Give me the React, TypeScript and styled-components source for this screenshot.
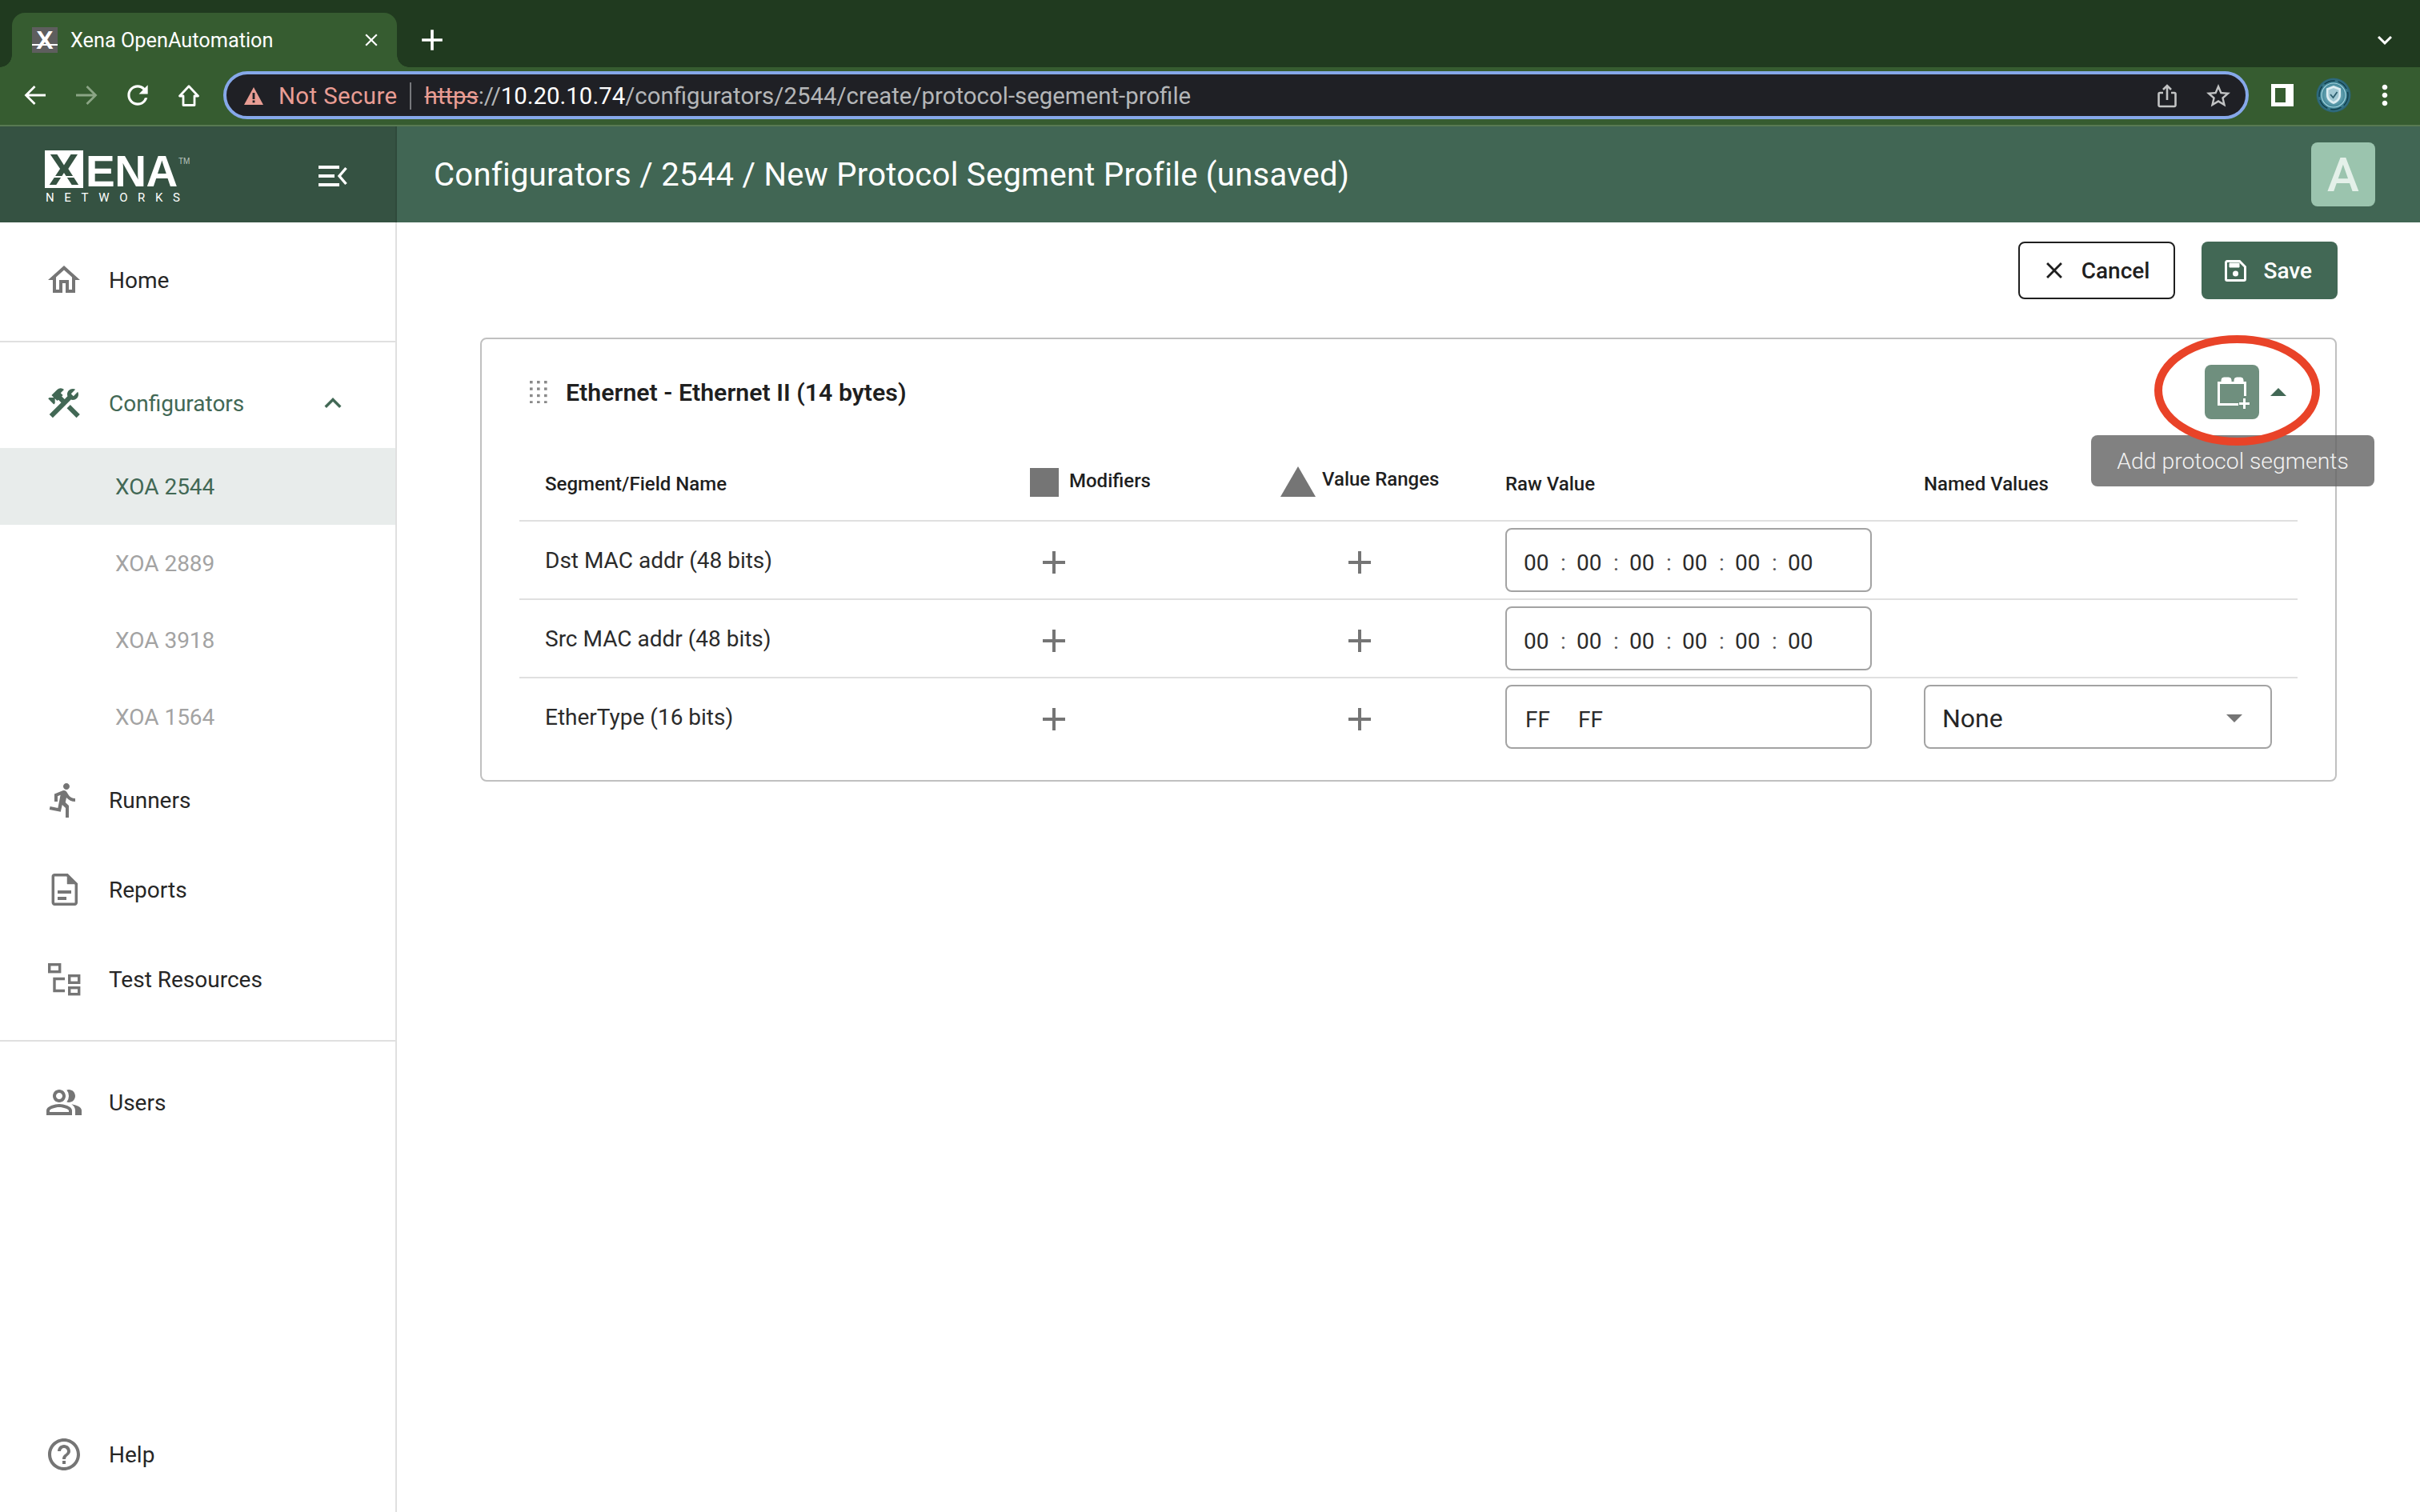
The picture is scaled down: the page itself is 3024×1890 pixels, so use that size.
import React from "react";
import styled, { createGlobalStyle } from "styled-components";
import {
  MdOutlineHome,
  MdConstruction,
  MdDirectionsRun,
  MdOutlinePeopleAlt,
  MdHelpOutline,
  MdKeyboardArrowUp,
  MdRefresh,
  MdClose,
  MdAdd,
  MdKeyboardArrowDown,
  MdMoreVert,
  MdStarBorder,
} from "react-icons/md";

const Global = createGlobalStyle`
  html, body { margin: 0; padding: 0; background: #fff; }
  body { font-family: Roboto, "Liberation Sans", sans-serif; color: #262626; }
  * { box-sizing: border-box; }
`;

const Page = styled.div`
  width: 3024px;
  height: 1890px;
  display: flex;
  flex-direction: column;
  overflow: hidden;
`;

/* ---------- browser chrome ---------- */
const TabStrip = styled.div`
  height: 84px;
  flex: none;
  background: #203a1f;
  display: flex;
  align-items: flex-end;
  padding: 0 12px 0 15px;
`;
const Tab = styled.div`
  position: relative;
  width: 481px;
  height: 68px;
  background: #365c30;
  border-radius: 16px 16px 0 0;
  display: flex;
  align-items: center;
  padding: 0 19px 0 25px;
  color: #fff;
  font-size: 25.3px;
  &::before,
  &::after {
    content: "";
    position: absolute;
    bottom: 0;
    width: 15px;
    height: 15px;
  }
  &::before {
    left: -15px;
    background: radial-gradient(circle at 0 0, transparent 14.5px, #365c30 15px);
  }
  &::after {
    right: -15px;
    background: radial-gradient(circle at 100% 0, transparent 14.5px, #365c30 15px);
  }
`;
const Favicon = styled.div`
  position: relative;
  width: 32px;
  height: 32px;
  flex: none;
  background: #5e5e5e;
  color: #fff;
  font: 700 32px/32px "Liberation Sans", sans-serif;
  text-align: center;
  &::after {
    content: "";
    position: absolute;
    left: 0;
    right: 0;
    top: 21px;
    height: 2px;
    background: #fff;
  }
`;
const TabTitle = styled.span`
  flex: 1;
  margin-left: 16px;
  white-space: nowrap;
`;
const NewTab = styled.div`
  width: 48px;
  height: 68px;
  margin-left: 20px;
  display: flex;
  align-items: center;
  justify-content: center;
  color: #fff;
`;
const StripEnd = styled.div`
  margin-left: auto;
  width: 64px;
  height: 68px;
  display: flex;
  align-items: center;
  justify-content: center;
  color: #fff;
`;
const Toolbar = styled.div`
  height: 74px;
  flex: none;
  background: #365c30;
  border-bottom: 2px solid #587a52;
  display: flex;
  align-items: center;
  padding: 0 12px;
`;
const ToolButton = styled.div<{ $dim?: boolean }>`
  width: 64px;
  height: 64px;
  flex: none;
  margin-top: -2px;
  display: flex;
  align-items: center;
  justify-content: center;
  color: ${(p) => (p.$dim ? "#8ba585" : "#fff")};
`;
const UrlBar = styled.div`
  flex: 1;
  height: 60px;
  margin: -2px 10px 0 11px;
  background: #1f2025;
  border: 4px solid #86a8e9;
  border-radius: 30px;
  display: flex;
  align-items: center;
  padding: 1px 16px 0 22px;
  font-size: 29.4px;
  white-space: nowrap;
`;
const NotSecure = styled.span`
  color: #e99d94;
  margin-left: 19px;
  letter-spacing: 0.4px;
`;
const UrlDivider = styled.span`
  width: 2px;
  height: 34px;
  background: #77787c;
  margin: 0 17px 0 15px;
`;
const Strike = styled.span`
  color: #e99d94;
  text-decoration: line-through;
`;
const UrlGrey = styled.span`
  color: #b4b6b8;
`;
const UrlWhite = styled.span`
  color: #fff;
`;
const UrlIcons = styled.div`
  margin-left: auto;
  display: flex;
  align-items: center;
  gap: 34px;
  color: #c2c3c4;
`;

/* ---------- app header ---------- */
const Header = styled.header`
  height: 120px;
  flex: none;
  display: flex;
`;
const Brand = styled.div`
  width: 496px;
  flex: none;
  background: #355242;
  border-right: 2px solid #2f4a3b;
  display: flex;
  align-items: center;
  justify-content: space-between;
  padding: 4px 60px 0 56px;
  color: #fff;
`;
const LogoBlock = styled.div`
  display: flex;
  flex-direction: column;
  gap: 6px;
`;
const LogoRow = styled.div`
  display: flex;
  align-items: flex-end;
  height: 47px;
`;
const LogoMark = styled.span`
  position: relative;
  width: 48px;
  height: 47px;
  background: #fff;
  color: #355242;
  font: 700 56px/47px "Liberation Sans", sans-serif;
  text-align: center;
  &::after {
    content: "";
    position: absolute;
    left: 0;
    right: 0;
    top: 32px;
    height: 2px;
    background: #fff;
  }
`;
const LogoWord = styled.span`
  font: 700 55px/42px "Liberation Sans", sans-serif;
  margin-left: 3px;
  letter-spacing: -0.4px;
`;
const LogoTm = styled.span`
  font: 400 10px/10px "Liberation Sans", sans-serif;
  align-self: flex-start;
  margin: 9px 0 0 1px;
  color: #b9c6bf;
`;
const LogoSub = styled.span`
  font: 400 15px/12px Roboto, sans-serif;
  letter-spacing: 12.6px;
  padding-left: 1px;
`;
const TitleBar = styled.div`
  flex: 1;
  background: #416654;
  display: flex;
  align-items: center;
  justify-content: space-between;
  padding: 0 56px 0 46px;
  color: #fff;
  font-size: 40px;
  letter-spacing: 0.28px;
`;
const TitleText = styled.span`
  padding-top: 1px;
`;
const Avatar = styled.div`
  width: 80px;
  height: 80px;
  border-radius: 8px;
  background: #9bc4ae;
  color: #e4f0e9;
  font: 500 60px/82px Roboto, sans-serif;
  letter-spacing: 0;
  text-align: center;
`;

/* ---------- body ---------- */
const Body = styled.div`
  flex: 1;
  display: flex;
  min-height: 0;
`;
const Sidebar = styled.nav`
  width: 496px;
  flex: none;
  border-right: 2px solid #e0e0e0;
  display: flex;
  flex-direction: column;
`;
const NavSection = styled.div<{ $pt?: number; $pb?: number; $line?: boolean; $end?: boolean }>`
  padding: ${(p) => p.$pt ?? 0}px 0 ${(p) => p.$pb ?? 0}px;
  border-bottom: ${(p) => (p.$line ? "2px solid #e0e0e0" : "none")};
  margin-top: ${(p) => (p.$end ? "auto" : "0")};
`;
const NavItem = styled.div<{ $h?: number; $active?: boolean }>`
  height: ${(p) => p.$h ?? 112}px;
  display: flex;
  align-items: center;
  padding-left: 56px;
  font-size: 28px;
  color: ${(p) => (p.$active ? "#426855" : "#262626")};
  svg.nav {
    flex: none;
    color: ${(p) => (p.$active ? "#426855" : "#757575")};
  }
`;
const NavLabel = styled.span`
  margin-left: 32px;
`;
const NavChevron = styled.span`
  margin-left: auto;
  margin-right: 57px;
  display: flex;
  color: #426855;
`;
const SubItem = styled.div<{ $active?: boolean }>`
  height: 96px;
  display: flex;
  align-items: center;
  padding-left: 144px;
  font-size: 28px;
  background: ${(p) => (p.$active ? "#e8eceb" : "transparent")};
  color: ${(p) => (p.$active ? "#426855" : "#a3a3a3")};
`;

const Main = styled.main`
  flex: 1;
  min-width: 0;
  padding: 0 104px;
`;
const Actions = styled.div`
  display: flex;
  justify-content: flex-end;
  gap: 33px;
  padding-top: 24px;
  margin-right: -1px;
`;
const Button = styled.div<{ $primary?: boolean }>`
  height: 72px;
  border-radius: 8px;
  display: flex;
  align-items: center;
  font-size: 28px;
  font-weight: 500;
  gap: ${(p) => (p.$primary ? 21 : 20)}px;
  padding: ${(p) => (p.$primary ? "0 32px 0 29px" : "0 30px 0 29px")};
  background: ${(p) => (p.$primary ? "#426855" : "#fff")};
  color: ${(p) => (p.$primary ? "#fff" : "#1f1f1f")};
  border: ${(p) => (p.$primary ? "none" : "2.5px solid #1f1f1f")};
`;
const Card = styled.section`
  position: relative;
  margin-top: 48px;
  height: 555px;
  border: 2px solid #c0c0c0;
  border-radius: 8px;
`;
const CardHead = styled.div`
  height: 133px;
  display: flex;
  align-items: flex-start;
  padding: 32px 61px 0 60px;
`;
const Grip = styled.svg`
  flex: none;
  margin-top: 20px;
`;
const CardTitle = styled.h2`
  margin: 0 0 0 23px;
  font-size: 30.3px;
  font-weight: 600;
  line-height: 70px;
  color: #1f1f1f;
`;
const AddBlock = styled.div`
  margin-left: auto;
  display: flex;
  align-items: center;
  gap: 14px;
`;
const AddButton = styled.div`
  width: 68px;
  height: 68px;
  border-radius: 8px;
  background: #6f8f7e;
  display: flex;
  align-items: center;
  justify-content: center;
`;
const Caret = styled.span<{ $down?: boolean; $color: string }>`
  width: 0;
  height: 0;
  border-left: 10px solid transparent;
  border-right: 10px solid transparent;
  ${(p) =>
    p.$down
      ? `border-top: 10px solid ${p.$color};`
      : `border-bottom: 10px solid ${p.$color};`}
`;
const Tooltip = styled.div`
  position: absolute;
  top: 120px;
  right: -49px;
  width: 354px;
  height: 64px;
  border-radius: 8px;
  background: rgba(97, 97, 97, 0.8);
  color: #f2f2f2;
  font-size: 28.4px;
  font-weight: 300;
  display: flex;
  align-items: center;
  justify-content: center;
  white-space: nowrap;
`;
const Annotation = styled.svg`
  position: absolute;
  top: -5px;
  right: 19px;
`;
const Table = styled.div`
  margin: 0 47px;
`;
const columns = "638px 313px 281px 523px 467px";
const HeadRow = styled.div`
  display: grid;
  grid-template-columns: ${columns};
  height: 93px;
  align-items: end;
  padding-bottom: 29px;
  font-size: 24px;
  font-weight: 500;
  color: #1f1f1f;
`;
const HeadCell = styled.div<{ $inset?: number }>`
  padding-left: ${(p) => p.$inset ?? 0}px;
  line-height: 32px;
  white-space: nowrap;
`;
const HeadIconCell = styled.div`
  display: flex;
  align-items: flex-start;
  gap: 13px;
  line-height: 32px;
`;
const Square = styled.span`
  width: 36px;
  height: 36px;
  background: #757575;
  flex: none;
`;
const Row = styled.div`
  display: grid;
  grid-template-columns: ${columns};
  height: 98px;
  align-items: center;
  border-top: 2px solid #e0e0e0;
  font-size: 28px;
`;
const FieldName = styled.div`
  padding-left: 32px;
  color: #2b2b2b;
`;
const PlusCell = styled.div<{ $inset: number }>`
  padding-left: ${(p) => p.$inset}px;
  padding-top: 6px;
  display: flex;
  color: #757575;
`;
const Field = styled.div`
  height: 80px;
  border: 2.5px solid #a3a3a3;
  border-radius: 8px;
  display: flex;
  align-items: center;
  padding: 6px 0 0 21px;
  color: #2b2b2b;
`;
const RawField = styled(Field)`
  width: 458px;
`;
const HexField = styled(RawField)`
  padding-left: 23px;
`;
const Octet = styled.span<{ $wide?: boolean }>`
  width: ${(p) => (p.$wide ? 66 : 32)}px;
`;
const Sep = styled.span`
  width: 34px;
  padding-left: 14px;
  color: #555;
`;
const SelectField = styled(Field)`
  width: 435px;
  font-size: 32px;
  padding: 4px 35px 0 21px;
  justify-content: space-between;
  color: #262626;
`;

const nav = { className: "nav", size: 48 };

const TreeIcon = () => (
  <svg className="nav" width="48" height="48" viewBox="-4 -4 48 48" fill="none" stroke="#757575" strokeWidth="3.4">
    <rect x="1.7" y="1.7" width="13" height="9" />
    <rect x="26.7" y="15.7" width="12" height="8.6" />
    <rect x="26.7" y="30.7" width="12" height="8" />
    <path d="M21 19.5H8v15h13" />
  </svg>
);

const ReportIcon = () => (
  <svg className="nav" width="48" height="48" viewBox="0 0 48 48" fill="none" stroke="#757575" strokeWidth="3.5">
    <path d="M12 5.800h16L39.300 17v23a2 2 0 0 1-2 2.200H12.300A2 2 0 0 1 10.300 40V7.800A2 2 0 0 1 12 5.800z" />
    <path d="M28 5l12 12H28z" fill="#757575" strokeWidth="0.5" />
    <path d="M16 27h17M16 35h11" strokeWidth="4" />
  </svg>
);

const MacField = () => (
  <RawField>
    {[0, 1, 2, 3, 4, 5].map((i) => (
      <React.Fragment key={i}>
        <Octet>00</Octet>
        {i < 5 && <Sep>:</Sep>}
      </React.Fragment>
    ))}
  </RawField>
);

const Plus = () => <MdAdd size={48} style={{ margin: "-10px" }} />;

const rows = [
  { name: "Dst MAC addr (48 bits)" },
  { name: "Src MAC addr (48 bits)" },
];

export default function App() {
  return (
    <Page>
      <Global />
      <TabStrip>
        <Tab>
          <Favicon>X</Favicon>
          <TabTitle>Xena OpenAutomation</TabTitle>
          <MdClose size={26} />
        </Tab>
        <NewTab>
          <MdAdd size={44} />
        </NewTab>
        <StripEnd>
          <MdKeyboardArrowDown size={36} />
        </StripEnd>
      </TabStrip>
      <Toolbar>
        <ToolButton>
          <svg width="28" height="26" viewBox="0 0 28 26" fill="none" stroke="currentColor" strokeWidth="2.800">
            <path d="M27 13H3M13.500 2 2.500 13l11 11" />
          </svg>
        </ToolButton>
        <ToolButton $dim>
          <svg width="28" height="26" viewBox="0 0 28 26" fill="none" stroke="currentColor" strokeWidth="2.800">
            <path d="M1 13h24M14.500 2l11 11-11 11" />
          </svg>
        </ToolButton>
        <ToolButton><MdRefresh size={38} /></ToolButton>
        <ToolButton>
          <svg width="26" height="27" viewBox="0 0 26 27" fill="none" stroke="#fff" strokeWidth="2.800">
            <path d="M13 1.800 24.500 14H20v11.500H6V14H1.500z" strokeLinejoin="round" />
          </svg>
        </ToolButton>
        <UrlBar>
          <svg width="24" height="22" viewBox="0 0 24 22">
            <path d="M12 0 24 22H0z" fill="#e99d94" />
            <rect x="10.600" y="7" width="2.800" height="8" fill="#1f2025" />
            <rect x="10.600" y="16.500" width="2.800" height="2.800" fill="#1f2025" />
          </svg>
          <NotSecure>Not Secure</NotSecure>
          <UrlDivider />
          <Strike>https</Strike>
          <UrlGrey>://</UrlGrey>
          <UrlWhite>10.20.10.74</UrlWhite>
          <UrlGrey>/configurators/2544/create/protocol-segement-profile</UrlGrey>
          <UrlIcons>
            <svg width="24" height="30" viewBox="0 0 24 30" fill="none" stroke="currentColor" strokeWidth="2.600">
              <path d="M7 11H3a1.500 1.500 0 0 0-1.500 1.500v14A1.500 1.500 0 0 0 3 28h18a1.500 1.500 0 0 0 1.500-1.500v-14A1.500 1.500 0 0 0 21 11h-4" />
              <path d="M12 20V2M7 7l5-5 5 5" />
            </svg>
            <MdStarBorder size={36} />
          </UrlIcons>
        </UrlBar>
        <ToolButton>
          <svg width="28" height="28" viewBox="0 0 28 28">
            <path fillRule="evenodd" d="M0 0h28v28H0zM5 5v18h13V5z" fill="#fff" />
          </svg>
        </ToolButton>
        <ToolButton>
          <svg width="44" height="44" viewBox="0 0 44 44">
            <defs>
              <radialGradient id="ext" cx="50%" cy="50%" r="50%">
                <stop offset="0%" stopColor="#a9d3de" />
                <stop offset="70%" stopColor="#3f8597" />
                <stop offset="100%" stopColor="#2a6273" />
              </radialGradient>
            </defs>
            <circle cx="22" cy="22" r="21.500" fill="url(#ext)" />
            <circle cx="22" cy="22" r="18" fill="none" stroke="#123f4d" strokeWidth="1.500" strokeDasharray="14 4" />
            <circle cx="22" cy="22" r="15" fill="none" stroke="#a7d5df" strokeWidth="1.200" />
            <path d="M22 10l9 3.500v8c0 6-4 9.500-9 11.500-5-2-9-5.500-9-11.500v-8z" fill="#dcedf2" />
            <path d="M22 13l6.500 2.500v6c0 4-3 7-6.500 8.500-3.500-1.500-6.500-4.500-6.500-8.500v-6z" fill="#a2c9d4" />
            <path d="M18 21l3.500 4 5-7" fill="none" stroke="#2f6070" strokeWidth="1.800" />
          </svg>
        </ToolButton>
        <ToolButton><MdMoreVert size={40} /></ToolButton>
      </Toolbar>

      <Header>
        <Brand>
          <LogoBlock>
            <LogoRow>
              <LogoMark>X</LogoMark>
              <LogoWord>ENA</LogoWord>
              <LogoTm>TM</LogoTm>
            </LogoRow>
            <LogoSub>NETWORKS</LogoSub>
          </LogoBlock>
          <svg width="36" height="26" viewBox="0 0 36 26" fill="none" stroke="#fff" strokeWidth="4">
            <path d="M0 2h26M0 13h20M0 24h26" />
            <path d="M34.500 3 26 13l8.500 10" strokeWidth="3.400" />
          </svg>
        </Brand>
        <TitleBar>
          <TitleText>Configurators / 2544 / New Protocol Segment Profile (unsaved)</TitleText>
          <Avatar>A</Avatar>
        </TitleBar>
      </Header>

      <Body>
        <Sidebar>
          <NavSection $pb={4} $line>
            <NavItem $h={144}>
              <MdOutlineHome {...nav} />
              <NavLabel>Home</NavLabel>
            </NavItem>
          </NavSection>
          <NavSection $pt={20} $pb={20} $line>
            <NavItem $active>
              <MdConstruction {...nav} />
              <NavLabel>Configurators</NavLabel>
              <NavChevron><MdKeyboardArrowUp size={42} /></NavChevron>
            </NavItem>
            <SubItem $active>XOA 2544</SubItem>
            <SubItem>XOA 2889</SubItem>
            <SubItem>XOA 3918</SubItem>
            <SubItem>XOA 1564</SubItem>
            <NavItem>
              <MdDirectionsRun {...nav} />
              <NavLabel>Runners</NavLabel>
            </NavItem>
            <NavItem>
              <ReportIcon />
              <NavLabel>Reports</NavLabel>
            </NavItem>
            <NavItem>
              <TreeIcon />
              <NavLabel>Test Resources</NavLabel>
            </NavItem>
          </NavSection>
          <NavSection $pt={20}>
            <NavItem>
              <MdOutlinePeopleAlt {...nav} />
              <NavLabel>Users</NavLabel>
            </NavItem>
          </NavSection>
          <NavSection $end $pb={16}>
            <NavItem>
              <MdHelpOutline {...nav} />
              <NavLabel>Help</NavLabel>
            </NavItem>
          </NavSection>
        </Sidebar>

        <Main>
          <Actions>
            <Button>
              <MdClose size={34} style={{ margin: "-3px" }} />
              <span>Cancel</span>
            </Button>
            <Button $primary>
              <svg width="27" height="27" viewBox="0 0 27 27" fill="none" stroke="#fff" strokeWidth="3">
                <path d="M3 1.500h15.500l7 7V24a1.500 1.500 0 0 1-1.500 1.500H3A1.500 1.500 0 0 1 1.500 24V3A1.500 1.500 0 0 1 3 1.500z" />
                <path d="M6 4h12v5H6z" fill="#fff" strokeWidth="1" />
                <circle cx="13.500" cy="17" r="3.500" fill="#fff" stroke="none" />
              </svg>
              <span>Save</span>
            </Button>
          </Actions>

          <Card>
            <CardHead>
              <Grip width="22" height="28" viewBox="0 0 22 28" fill="#8a8a8a">
                {[0, 1, 2].flatMap((r) =>
                  [0, 1, 2, 3].map((c) => (
                    <rect key={`${r}-${c}`} x={r * 9} y={c * 8.4} width="3.600" height="3.400" />
                  ))
                )}
              </Grip>
              <CardTitle>Ethernet - Ethernet II (14 bytes)</CardTitle>
              <AddBlock>
                <AddButton>
                  <svg width="44" height="44" viewBox="0 0 44 44" fill="none" stroke="#fff" strokeWidth="3">
                    <path d="M30 37.500H5.500V10.500h33V27" />
                    <path d="M9 9.500V7a3 3 0 0 1 3-3h6a3 3 0 0 1 3 3v2.500zM25 9.500V7a3 3 0 0 1 3-3h5a3 3 0 0 1 3 3v2.500z" fill="#fff" strokeWidth="1" />
                    <path d="M37.500 30v13M31 36.500h13" />
                  </svg>
                </AddButton>
                <Caret $color="#426855" />
              </AddBlock>
            </CardHead>
            <Table>
              <HeadRow>
                <HeadCell $inset={32}>Segment/Field Name</HeadCell>
                <HeadIconCell>
                  <Square />
                  <span>Modifiers</span>
                </HeadIconCell>
                <HeadIconCell>
                  <svg width="44" height="38" viewBox="0 0 44 38" style={{ flex: "none", marginRight: "-5px" }}>
                    <path d="M22 0 44 38H0z" fill="#757575" />
                  </svg>
                  <span>Value Ranges</span>
                </HeadIconCell>
                <HeadCell>Raw Value</HeadCell>
                <HeadCell>Named Values</HeadCell>
              </HeadRow>
              {rows.map((r) => (
                <Row key={r.name}>
                  <FieldName>{r.name}</FieldName>
                  <PlusCell $inset={16}><Plus /></PlusCell>
                  <PlusCell $inset={85}><Plus /></PlusCell>
                  <MacField />
                </Row>
              ))}
              <Row>
                <FieldName>EtherType (16 bits)</FieldName>
                <PlusCell $inset={16}><Plus /></PlusCell>
                <PlusCell $inset={85}><Plus /></PlusCell>
                <HexField>
                  <Octet $wide>FF</Octet>
                  <Octet>FF</Octet>
                </HexField>
                <SelectField>
                  <span>None</span>
                  <Caret $down $color="#757575" />
                </SelectField>
              </Row>
            </Table>
            <Tooltip>Add protocol segments</Tooltip>
            <Annotation width="207" height="138" viewBox="0 0 207 138" fill="none">
              <ellipse cx="103.500" cy="69" rx="98.500" ry="64" stroke="#e94328" strokeWidth="10" />
            </Annotation>
          </Card>
        </Main>
      </Body>
    </Page>
  );
}
